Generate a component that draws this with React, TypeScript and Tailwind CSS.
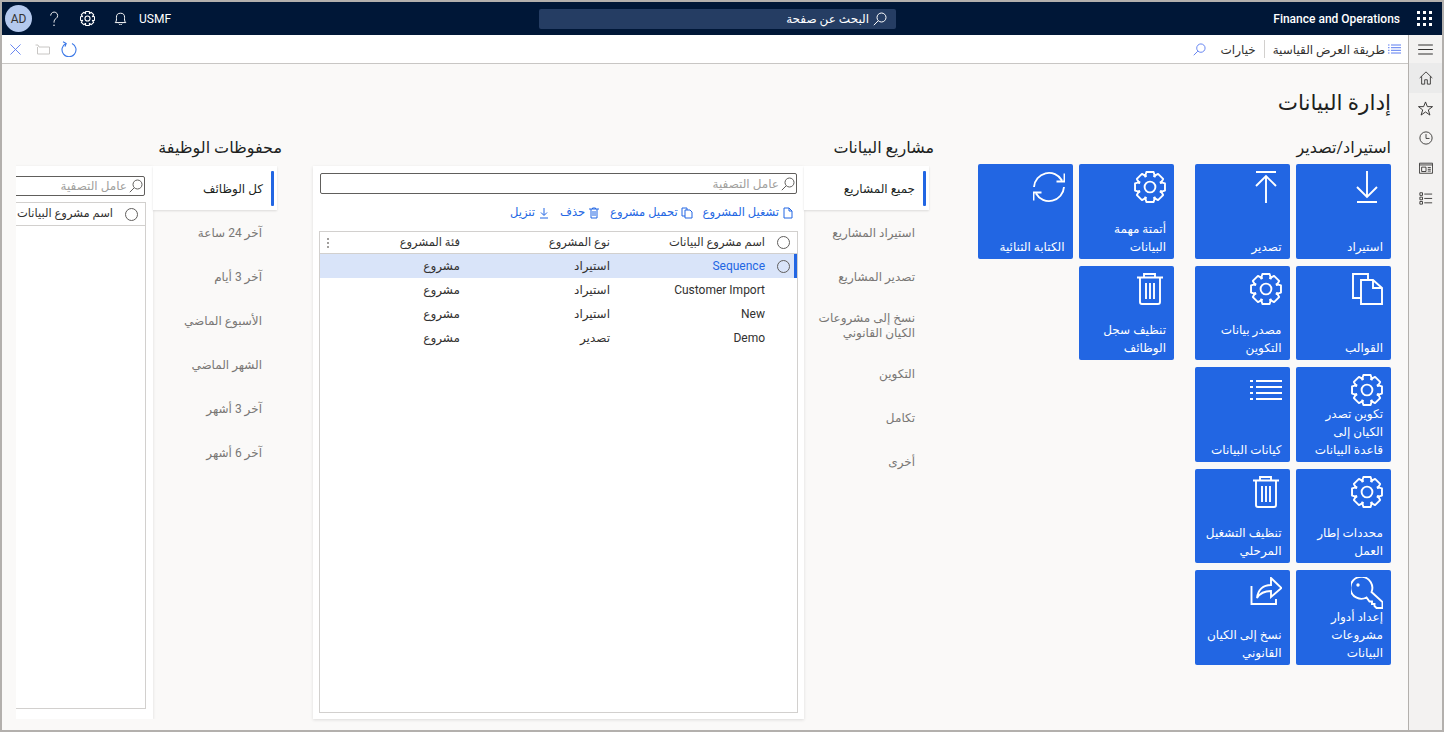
import React from 'react';

const ui = { fontFamily: 'Roboto, "Open Sans", "Noto Sans", "DejaVu Sans", sans-serif' };

const gearPath = (() => {
  // 8 tooth cog in a 32 box
  const pts: string[] = [];
  for (let i = 0; i < 8; i++) {
    const a = (i * Math.PI) / 4 - Math.PI / 2;
    const step = Math.PI / 4;
    const rows: [number, number][] = [
      [-0.56 * step, 11.6],
      [-0.3 * step, 15.4],
      [0.3 * step, 15.4],
      [0.56 * step, 11.6],
    ];
    rows.forEach(([d, r]) => {
      pts.push(`${(16 + r * Math.cos(a + d)).toFixed(2)},${(16 + r * Math.sin(a + d)).toFixed(2)}`);
    });
  }
  return 'M' + pts.join(' L') + ' Z';
})();

const Svg = ({ children, className = 'w-8 h-8', sw = 1.9 }: { children: React.ReactNode; className?: string; sw?: number }) => (
  <svg viewBox="0 0 32 32" fill="none" stroke="currentColor" strokeWidth={sw} className={className}>
    {children}
  </svg>
);

const Gear = ({ className, sw }: { className?: string; sw?: number }) => (
  <Svg className={className} sw={sw}>
    <path d={gearPath} strokeLinejoin="round" />
    <circle cx="16" cy="16" r="5.4" />
  </Svg>
);

const Trash = () => (
  <Svg>
    <path d="M3 4.5H29M10 4V1H21V4M6 5V29A2 2 0 0 0 8 31H24A2 2 0 0 0 26 29V5M12 10V26M16 10V26M20 10V26" />
  </Svg>
);

const icons: Record<string, React.ReactNode> = {
  down: (
    <Svg>
      <path d="M16 0V26M6 16L16 26L26 16M6 31H26" />
    </Svg>
  ),
  up: (
    <Svg>
      <path d="M6 1H26M16 32V6M6 15L16 5L26 15" />
    </Svg>
  ),
  gear: <Gear />,
  sync: (
    <Svg>
      <path d="M1 16A15 15 0 0 1 29 9.5M31.500 2.500V10.500H23.500M31 16A15 15 0 0 1 3 22.500M.5 29.500V21.500H8.500" />
    </Svg>
  ),
  pages: (
    <Svg>
      <path d="M10 7H22L31 15V31H10ZM22 7V15H31M10 25H2V1H17V7" />
    </Svg>
  ),
  trash: <Trash />,
  list: (
    <Svg>
      <path d="M6 7H32M6 13H32M6 19H32M6 25H32M0 7H3M0 13H3M0 19H3M0 25H3" />
    </Svg>
  ),
  key: (
    <Svg>
      <path d="M20.500 15L31.500 25V31H25.500L23.500 29V27H21V24.500H18.500L15.500 20.500A11 11 0 1 1 20.500 15Z" />
      <circle cx="7" cy="8" r="1.7" fill="currentColor" stroke="none" />
    </Svg>
  ),
  share: (
    <Svg>
      <path d="M21 1L31.500 11L21 20V14C14 14 10 16 7 21C8 13 13 8 21 8ZM1.500 9V27H26V22" />
    </Svg>
  ),
};

const Tile = ({ icon, label }: { icon: string; label: string[] }) => (
  <div className="relative w-[94.6px] h-[94.6px] rounded-[2px] bg-[#2266e3] text-white">
    <div className="pr-[8px] pt-[7px] flex justify-start">{icons[icon]}</div>
    <div className="absolute right-[8px] left-[4px] bottom-[3px] text-[12px] leading-[18px] font-medium">
      {label.map((l) => (
        <div key={l} className="whitespace-nowrap">
          {l}
        </div>
      ))}
    </div>
  </div>
);

const Search = ({ className = 'w-[14px] h-[14px]' }: { className?: string }) => (
  <svg viewBox="0 0 14 14" fill="none" stroke="currentColor" strokeWidth="1" className={className}>
    <circle cx="8.500" cy="5.500" r="4.500" />
    <path d="M5.200 8.800L.8 13.200" />
  </svg>
);

const Radio = () => <span className="block w-[13px] h-[13px] rounded-full border border-[#605e5c] shrink-0" />;

const Tabs = ({ items, narrow }: { items: string[][]; narrow?: boolean }) => (
  <div className={`${narrow ? 'w-[124px]' : 'w-[125px]'} shrink-0`}>
    {items.map((t, i) =>
      i === 0 ? (
        <div key={t[0]} className="h-[44px] bg-white shadow-[0_1px_2px_rgba(0,0,0,0.12)] flex items-center pr-[3px] relative z-10">
          <span className="w-[3px] h-[35px] bg-[#2266e3] rounded-[1px]" />
          <span className="mr-[8px] pt-[2px] text-[12px] font-medium text-[#201f1e]">{t[0]}</span>
        </div>
      ) : (
        <div
          key={t[0]}
          className={`${t.length > 1 ? 'h-[53px]' : 'h-[44px]'} ${narrow ? 'pr-[15px]' : 'pr-[14px]'} pt-[2px] flex flex-col justify-center text-[12px] leading-[15px] text-[#797775]`}
        >
          {t.map((l) => (
            <div key={l} className="whitespace-nowrap">
              {l}
            </div>
          ))}
        </div>
      ),
    )}
  </div>
);

const Filter = ({ className }: { className: string }) => (
  <div className={`border border-[#605e5c] rounded-[2px] flex items-center gap-[2px] pr-[1px] text-[#a19f9d] text-[12px] ${className}`}>
    <Search className="w-[14px] h-[14px] text-[#605e5c]" />
    <span>عامل التصفية</span>
  </div>
);

const rows = [
  ['Sequence', 'استيراد', 'مشروع'],
  ['Customer Import', 'استيراد', 'مشروع'],
  ['New', 'استيراد', 'مشروع'],
  ['Demo', 'تصدير', 'مشروع'],
];

const ActionIcon = ({ d }: { d: string }) => (
  <svg viewBox="0 0 12 12" fill="none" stroke="currentColor" strokeWidth="1" className="w-[12px] h-[12px]">
    <path d={d} />
  </svg>
);

export default function App() {
  return (
    <div dir="ltr" style={ui} className="w-[1444px] h-[732px] overflow-hidden border-2 border-[#b3b0ad] bg-[#faf9f8] flex flex-col text-[#323130]">
      <header className="h-[33px] shrink-0 bg-[#001737] flex items-center text-white">
        <div className="flex items-center w-[537px] pl-[3px]">
          <span className="w-[27px] h-[27px] rounded-full bg-[#b4c9ee] text-[#323130] text-[12px] flex items-center justify-center">AD</span>
          <svg viewBox="0 0 12 18" fill="none" stroke="currentColor" strokeWidth="1.100" className="w-[10px] h-[15px] ml-[17px]">
            <path d="M2 5.500A4.200 4.200 0 1 1 8.500 9C7 10 6 11 6 14" />
            <circle cx="6" cy="17" r=".9" fill="currentColor" stroke="none" />
          </svg>
          <Gear className="w-[15px] h-[15px] ml-[21px]" sw={2.400} />
          <svg viewBox="0 0 16 16" fill="none" stroke="currentColor" strokeWidth="1.200" className="w-[13px] h-[13px] ml-[19px]">
            <path d="M1.500 13H14.500C12.500 11 13 9 13 6.500A5 5 0 0 0 3 6.500C3 9 3.500 11 1.500 13ZM6 14.500A2.200 2.200 0 0 0 10 14.500" />
          </svg>
          <span className="ml-[12px] text-[12px]">USMF</span>
        </div>
        <div dir="rtl" className="w-[357px] h-[20px] bg-[#253d63] rounded-[2px] flex items-center pr-[9px] gap-[4px] text-[12px] text-white">
          <Search />
          <span>البحث عن صفحة</span>
        </div>
        <div className="flex-1 flex items-center justify-end pr-[10px]">
          <span className="text-[12px] font-medium mr-[17px]">Finance and Operations</span>
          <div className="grid grid-cols-3 gap-[3px]">
            {Array.from({ length: 9 }).map((_, i) => (
              <span key={i} className="w-[3px] h-[3px] bg-white" />
            ))}
          </div>
        </div>
      </header>

      <div className="flex-1 flex min-h-0">
        <div className="flex-1 flex flex-col min-w-0">
          <div className="h-[29px] shrink-0 bg-white border-b border-[#c8c6c4] flex items-center justify-between">
            <div className="flex items-center pl-[8px]">
              <svg viewBox="0 0 12 12" fill="none" stroke="#5b7cf0" strokeWidth="1" className="w-[11px] h-[11px]">
                <path d="M.5.5L11.500 11.500M11.500.5L.5 11.500" />
              </svg>
              <svg viewBox="0 0 15 11" fill="none" stroke="#c8c6c4" strokeWidth="1" className="w-[15px] h-[11px] ml-[14px]">
                <path d="M.5 1H3L4 3H14.500V10H2.500V3" />
              </svg>
              <svg viewBox="0 0 16 16" fill="none" stroke="#3b78e7" strokeWidth="1.100" className="w-[16px] h-[16px] ml-[11px]">
                <path d="M5 2.400A7 7 0 1 0 11 2.400M2 .8L5.200 2.400L4 5.600" />
              </svg>
            </div>
            <div dir="rtl" className="flex items-center text-[12px] pr-[7px]">
              <svg viewBox="0 0 13 10" stroke="#5b7cf0" strokeWidth="1" className="w-[13px] h-[10px]">
                <path d="M3 1H13M3 3.700H13M3 6.300H13M3 9H13M0 1H1.500M0 3.700H1.500M0 6.300H1.500M0 9H1.500" />
              </svg>
              <span className="mr-[3px] pt-[2px]">طريقة العرض القياسية</span>
              <span className="w-px h-[18px] bg-[#d2d0ce] mx-[8px]" />
              <span className="pt-[2px]">خيارات</span>
              <Search className="w-[13px] h-[13px] mr-[15px] text-[#5b7cf0]" />
            </div>
          </div>

          <main dir="rtl" className="flex-1 min-h-0 flex flex-col pr-[17px] pl-[14px] pb-[11px]">
            <h1 className="text-[21.5px] leading-[30px] mt-[24px] font-normal text-[#201f1e] h-[30px]">إدارة البيانات</h1>
            <div className="flex-1 min-h-0 flex mt-[20px]">
              <section className="shrink-0 w-[413px]">
                <h2 className="text-[16px] leading-[20px] h-[20px] text-[#201f1e]">استيراد/تصدير</h2>
                <div className="flex gap-[21px] mt-[6px]">
                  <div className="grid grid-cols-2 gap-[7px] content-start">
                    <Tile icon="down" label={['استيراد']} />
                    <Tile icon="up" label={['تصدير']} />
                    <Tile icon="pages" label={['القوالب']} />
                    <Tile icon="gear" label={['مصدر بيانات', 'التكوين']} />
                    <Tile icon="gear" label={['تكوين تصدر', 'الكيان إلى', 'قاعدة البيانات']} />
                    <Tile icon="list" label={['كيانات البيانات']} />
                    <Tile icon="gear" label={['محددات إطار', 'العمل']} />
                    <Tile icon="trash" label={['تنظيف التشغيل', 'المرحلي']} />
                    <Tile icon="key" label={['إعداد أدوار', 'مشروعات', 'البيانات']} />
                    <Tile icon="share" label={['نسخ إلى الكيان', 'القانوني']} />
                  </div>
                  <div className="grid grid-cols-2 gap-[7px] content-start">
                    <Tile icon="gear" label={['أتمتة مهمة', 'البيانات']} />
                    <Tile icon="sync" label={['الكتابة الثنائية']} />
                    <Tile icon="trash" label={['تنظيف سجل', 'الوظائف']} />
                  </div>
                </div>
              </section>

              <section className="shrink-0 w-[621px] mr-[44px] ml-[31px] flex flex-col">
                <h2 className="text-[16px] leading-[20px] h-[20px] text-[#201f1e]">مشاريع البيانات</h2>
                <div className="flex-1 min-h-0 flex mr-[5px] mt-[8px]">
                  <Tabs
                    items={[
                      ['جميع المشاريع'],
                      ['استيراد المشاريع'],
                      ['تصدير المشاريع'],
                      ['نسخ إلى مشروعات', 'الكيان القانوني'],
                      ['التكوين'],
                      ['تكامل'],
                      ['أخرى'],
                    ]}
                  />
                  <div className="flex-1 min-w-0 bg-white shadow-[0_1px_3px_rgba(0,0,0,0.12)] flex flex-col px-[7px] pt-[7px] pb-[6px]">
                    <Filter className="w-[477px] h-[21px]" />
                    <div className="h-[37px] pt-[1px] flex items-center gap-[10px] text-[11.5px] text-[#2266e3] pr-[3px]">
                      <span className="flex items-center gap-[3px]">
                        <ActionIcon d="M2 11V1H7L10 4V11ZM7 1V4H10" />
                        تشغيل المشروع
                      </span>
                      <span className="flex items-center gap-[3px]">
                        <ActionIcon d="M4 3V11H11V5L9 3ZM4 9H1V1H6V3" />
                        تحميل مشروع
                      </span>
                      <span className="flex items-center gap-[3px]">
                        <ActionIcon d="M1 2H11M3 2V11H9V2M5 4V9M7 4V9M4.500 2V1H7.500V2" />
                        حذف
                      </span>
                      <span className="flex items-center gap-[3px]">
                        <ActionIcon d="M6 1V8M3 5.500L6 8.500L9 5.500M2 11H10" />
                        تنزيل
                      </span>
                    </div>
                    <div className="flex-1 min-h-0 border border-[#d2d0ce] w-[479px] -mr-px">
                      <div className="h-[22px] flex items-center border-b border-[#d2d0ce] font-medium text-[11.5px] text-[#323130]">
                        <div className="w-[32px] flex justify-start pr-[7px]">
                          <Radio />
                        </div>
                        <div className="w-[155px]">اسم مشروع البيانات</div>
                        <div className="w-[150px]">نوع المشروع</div>
                        <div className="w-[120px]">فئة المشروع</div>
                        <div className="flex-1 flex flex-col items-center gap-[2px] mr-[4px]">
                          <span className="w-[2px] h-[2px] bg-[#a19f9d]" />
                          <span className="w-[2px] h-[2px] bg-[#a19f9d]" />
                          <span className="w-[2px] h-[2px] bg-[#a19f9d]" />
                        </div>
                      </div>
                      {rows.map((r, i) => (
                        <div key={r[0]} className={`h-[24px] flex items-center text-[12px] relative ${i === 0 ? 'bg-[#d9e4f9]' : ''}`}>
                          {i === 0 && <span className="absolute right-0 top-0 bottom-0 w-[3px] bg-[#2266e3]" />}
                          <div className="w-[32px] flex justify-start pr-[7px]">{i === 0 && <Radio />}</div>
                          <div className={`w-[155px] ${i === 0 ? 'text-[#2266e3]' : ''}`}>{r[0]}</div>
                          <div className="w-[150px]">{r[1]}</div>
                          <div className="w-[120px]">{r[2]}</div>
                        </div>
                      ))}
                    </div>
                  </div>
                </div>
              </section>

              <section className="flex-1 min-w-0 overflow-hidden flex flex-col">
                <h2 className="text-[16px] leading-[20px] h-[20px] text-[#201f1e]">محفوظات الوظيفة</h2>
                <div className="flex-1 min-h-0 flex mr-[5px] mt-[8px]">
                  <Tabs narrow items={[['كل الوظائف'], ['آخر 24 ساعة'], ['آخر 3 أيام'], ['الأسبوع الماضي'], ['الشهر الماضي'], ['آخر 3 أشهر'], ['آخر 6 أشهر']]} />
                  <div className="w-[491px] shrink-0 bg-white shadow-[0_1px_3px_rgba(0,0,0,0.12)] flex flex-col pr-[8px] pt-[10px] pb-[10px]">
                    <Filter className="w-[477px] h-[20px]" />
                    <div className="flex-1 min-h-0 border border-[#d2d0ce] w-[479px] -mr-px mt-[6px]">
                      <div className="h-[23px] flex items-center border-b border-[#d2d0ce] font-medium text-[11.5px]">
                        <div className="w-[32px] flex justify-start pr-[7px]">
                          <Radio />
                        </div>
                        <div>اسم مشروع البيانات</div>
                      </div>
                    </div>
                  </div>
                </div>
              </section>
            </div>
          </main>
        </div>

        <aside className="w-[34px] shrink-0 bg-[#f3f2f1] border-l border-[#b3b0ad] flex flex-col text-[#323130]">
          <div className="h-[28px] flex items-center justify-center">
            <svg viewBox="0 0 16 12" stroke="currentColor" strokeWidth="1.100" className="w-[15px] h-[11px]">
              <path d="M0 1H16M0 6H16M0 11H16" />
            </svg>
          </div>
          <div className="h-[30px] bg-[#ebebeb] flex items-center justify-center">
            <svg viewBox="0 0 16 16" fill="none" stroke="currentColor" strokeWidth="1" className="w-[14px] h-[14px]">
              <path d="M.8 8L8 1L15.200 8M3 6V15H6.500V10H9.500V15H13V6" />
            </svg>
          </div>
          <div className="h-[30px] flex items-center justify-center">
            <svg viewBox="0 0 16 16" fill="none" stroke="currentColor" strokeWidth="1" className="w-[15px] h-[15px]">
              <path d="M8 1L10 6H15.500L11 9.500L12.700 15L8 11.700L3.300 15L5 9.500L.5 6H6Z" />
            </svg>
          </div>
          <div className="h-[30px] flex items-center justify-center">
            <svg viewBox="0 0 16 16" fill="none" stroke="currentColor" strokeWidth="1" className="w-[14px] h-[14px]">
              <circle cx="8" cy="8" r="7" />
              <path d="M8 3.500V8.500H12" />
            </svg>
          </div>
          <div className="h-[30px] flex items-center justify-center">
            <svg viewBox="0 0 16 16" fill="none" stroke="currentColor" strokeWidth="1" className="w-[14px] h-[14px]">
              <path d="M.5 2.500H15.500V14H.5ZM.5 4.500H15.500M3 7H8V12H3ZM10 7.500H13.500M10 9.500H13.500M10 11.500H13.500" />
            </svg>
          </div>
          <div className="h-[30px] flex items-center justify-center">
            <svg viewBox="0 0 16 16" fill="none" stroke="currentColor" strokeWidth="1" className="w-[14px] h-[14px]">
              <path d="M1 2H4V5H1ZM1 7H4V10H1ZM1 12H4V15H1ZM6 3.500H15M6 8.500H15M6 13.500H15" />
            </svg>
          </div>
        </aside>
      </div>
    </div>
  );
}
